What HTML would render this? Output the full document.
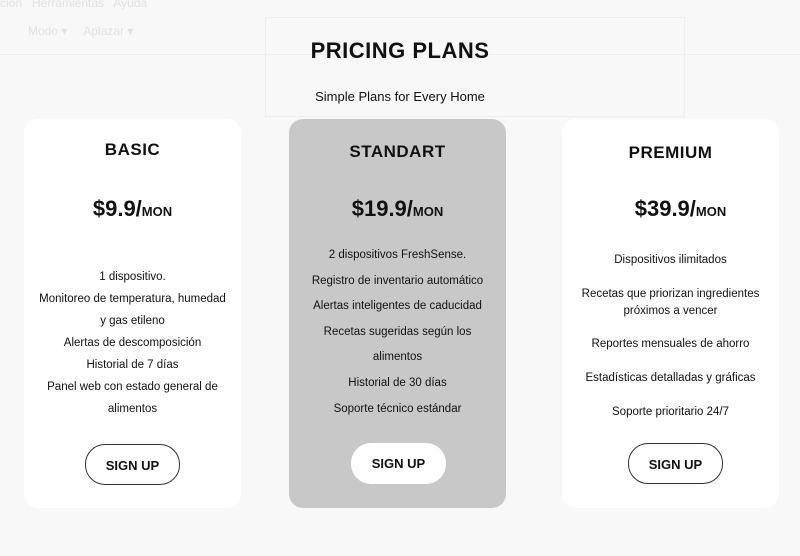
<!DOCTYPE html>
<html><head><meta charset="utf-8"><style>
*{margin:0;padding:0;box-sizing:border-box}
body{width:800px;height:556px;background:#f8f8f8;font-family:"Liberation Sans",sans-serif;color:#111;position:relative;overflow:hidden}
.abs{position:absolute}
.bg{color:#e2e2e2;font-size:12px}
h1{position:absolute;left:0;width:800px;top:38px;text-align:center;font-size:22px;font-weight:bold;letter-spacing:.5px}
.sub{position:absolute;left:0;width:800px;top:89px;text-align:center;font-size:13px}
.card{position:absolute;top:119px;width:217px;height:389px;background:#fff;border-radius:14px;text-align:center}
.card h2{position:absolute;left:0;right:0;font-size:17px;font-weight:bold;letter-spacing:.5px}
.price{position:absolute;left:0;right:0;top:196px;font-size:22px;font-weight:bold}
.price small{font-size:13px}
.items{position:absolute;left:8px;right:8px;font-size:11.5px}
.btn{position:absolute;width:95px;height:41px;border-radius:20px;font-size:13px;font-weight:bold;line-height:41px;text-align:center;background:#fff}
</style></head><body>
<div class="abs bg" style="left:0;top:-4px">ción &nbsp; Herramientas &nbsp; Ayuda</div>
<div class="abs bg" style="left:28px;top:24px">Modo ▾ &nbsp;&nbsp;&nbsp; Aplazar ▾</div>
<div class="abs" style="left:0;top:54px;width:800px;height:1px;background:#eee"></div>
<div class="abs" style="left:265px;top:17px;width:420px;height:100px;border:1px solid #eee"></div>
<h1>PRICING PLANS</h1>
<div class="sub">Simple Plans for Every Home</div>

<div class="card" style="left:24px">
<h2 style="top:21px">BASIC</h2>
<div class="price" style="top:77px">$9.9/<small>MON</small></div>
<div class="items" style="top:147px;line-height:22px">1 dispositivo.<br>Monitoreo de temperatura, humedad<br>y gas etileno<br>Alertas de descomposición<br>Historial de 7 días<br>Panel web con estado general de<br>alimentos</div>
<div class="btn" style="left:61px;top:325px;border:1px solid #333">SIGN UP</div>
</div>

<div class="card" style="left:289px;background:#c8c8c8">
<h2 style="top:23px">STANDART</h2>
<div class="price" style="top:77px">$19.9/<small>MON</small></div>
<div class="items" style="top:124px;line-height:25.6px">2 dispositivos FreshSense.<br>Registro de inventario automático<br>Alertas inteligentes de caducidad<br>Recetas sugeridas según los<br>alimentos<br>Historial de 30 días<br>Soporte técnico estándar</div>
<div class="btn" style="left:62px;top:324px">SIGN UP</div>
</div>

<div class="card" style="left:562px">
<h2 style="top:24px">PREMIUM</h2>
<div class="price" style="top:77px;left:20px">$39.9/<small>MON</small></div>
<div class="items" style="top:133px;line-height:17px">Dispositivos ilimitados<br><div style="height:17px"></div>Recetas que priorizan ingredientes<br>próximos a vencer<br><div style="height:16px"></div>Reportes mensuales de ahorro<br><div style="height:17px"></div>Estadísticas detalladas y gráficas<br><div style="height:17px"></div>Soporte prioritario 24/7</div>
<div class="btn" style="left:66px;top:324px;border:1px solid #333">SIGN UP</div>
</div>
</body></html>
